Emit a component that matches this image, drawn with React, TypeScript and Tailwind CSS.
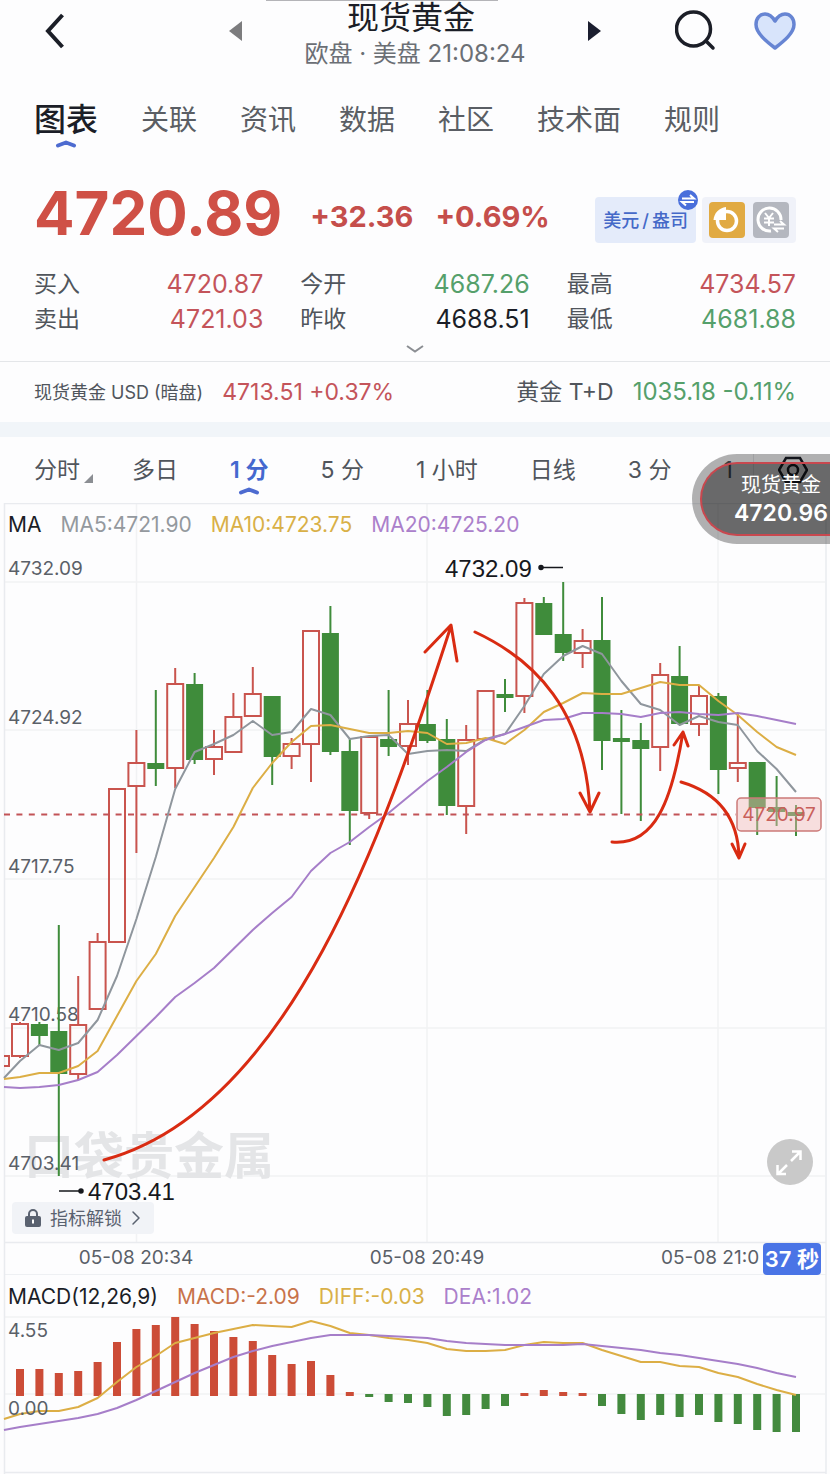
import { ChevronRight } from 'lucide-react';

type Candle = [up: boolean, high: number, top: number, bottom: number, low: number];

const STEP = 19.4;
const FIRST_X = 20;
const ZERO_Y = 1394;

const xAt = (i: number) => FIRST_X + i * STEP;

const U = true;
const D = false;

const candles: Candle[] = [
  [U, 1022, 1024, 1056, 1058], [D, 1022, 1024, 1036, 1046], [D, 925, 1031, 1074, 1176], [U, 976, 1025, 1074, 1080],
  [U, 933, 942, 1009, 1009], [U, 789, 789, 942, 942], [U, 730, 763, 786, 853], [D, 690, 763, 769, 786],
  [U, 668, 684, 768, 788], [D, 673, 684, 760, 764], [U, 730, 747, 759, 775], [U, 693, 717, 752, 752],
  [U, 667, 694, 716, 716], [D, 696, 696, 757, 785], [U, 738, 744, 756, 769], [U, 630, 631, 744, 782],
  [D, 606, 633, 752, 755], [D, 738, 751, 811, 845], [U, 737, 737, 813, 819], [D, 690, 739, 747, 756],
  [U, 700, 724, 746, 765], [D, 690, 724, 741, 743], [D, 719, 739, 806, 815], [U, 725, 740, 806, 834],
  [U, 691, 691, 739, 741], [D, 679, 694, 698, 712], [U, 598, 603, 696, 713], [D, 597, 603, 635, 635],
  [D, 582, 634, 653, 661], [U, 629, 641, 653, 668], [D, 597, 640, 741, 770], [D, 710, 738, 742, 814],
  [D, 723, 740, 749, 821], [U, 663, 675, 747, 771], [D, 646, 676, 724, 725], [U, 686, 696, 724, 736],
  [D, 693, 696, 770, 794], [U, 714, 763, 768, 782], [D, 762, 762, 808, 835], [D, 776, 807, 812, 826],
  [D, 805, 812, 816, 836],
];

// first value of every series is the point on the left edge of the plot
const ma5 = [1078, 1061, 1045, 1050, 1043, 1020, 976, 919, 857, 789, 752, 744, 735, 721, 735, 732, 709, 715, 739, 736, 735, 754, 751, 750, 751, 739, 734, 706, 674, 656, 646, 654, 681, 704, 710, 725, 716, 722, 725, 751, 769, 792];
const ma10 = [1079, 1077, 1073, 1073, 1066, 1051, 1016, 981, 954, 916, 887, 858, 827, 788, 763, 742, 726, 725, 729, 733, 733, 731, 733, 744, 743, 738, 744, 730, 712, 703, 693, 694, 694, 688, 682, 685, 685, 701, 715, 732, 747, 755];
const ma20 = [1087, 1088, 1087, 1085, 1080, 1072, 1055, 1036, 1017, 997, 983, 968, 949, 930, 913, 897, 871, 853, 842, 827, 813, 797, 781, 767, 752, 740, 734, 727, 720, 719, 713, 713, 714, 717, 713, 712, 714, 715, 713, 716, 720, 724];
const diff = [1419, 1414, 1411, 1411, 1407, 1398, 1382, 1367, 1356, 1343, 1338, 1333, 1329, 1325, 1326, 1327, 1321, 1326, 1333, 1335, 1338, 1340, 1343, 1349, 1351, 1351, 1350, 1345, 1342, 1343, 1343, 1350, 1356, 1362, 1362, 1366, 1367, 1373, 1377, 1384, 1390, 1395];
const dea = [1430, 1427, 1424, 1421, 1418, 1414, 1408, 1400, 1391, 1382, 1373, 1365, 1357, 1351, 1346, 1342, 1338, 1335, 1335, 1335, 1336, 1337, 1338, 1341, 1343, 1344, 1345, 1345, 1345, 1345, 1344, 1346, 1348, 1350, 1353, 1355, 1358, 1361, 1364, 1368, 1373, 1377];

// histogram height over (positive) or under (negative) the zero line
const histogram = [26, 26, 22, 24, 33, 53, 66, 70, 78, 71, 64, 58, 54, 40, 31, 34, 20, 3, -2, -7, -8, -12, -21, -20, -14, -11, 2, 5, 3, 2, -11, -19, -25, -20, -22, -20, -27, -29, -35, -37, -37];

const toPoints = (values: number[]) =>
  values.map((y, i) => `${i === 0 ? 4 : xAt(i - 1)},${y}`).join(' ');

const tabs = ['关联', '资讯', '数据', '社区', '技术面', '规则'];

const quotes = [
  { label: '买入', value: '4720.87', color: 'text-[#c4545a]' },
  { label: '今开', value: '4687.26', color: 'text-[#55a06b]' },
  { label: '最高', value: '4734.57', color: 'text-[#c4545a]' },
  { label: '卖出', value: '4721.03', color: 'text-[#c4545a]' },
  { label: '昨收', value: '4688.51', color: 'text-[#1b1e27]' },
  { label: '最低', value: '4681.88', color: 'text-[#55a06b]' },
];

const intervals = ['多日', '1 分', '5 分', '1 小时', '日线', '3 分', '1'];

const priceLabels = [
  { y: 575, text: '4732.09' },
  { y: 724, text: '4724.92' },
  { y: 873, text: '4717.75' },
  { y: 1021, text: '4710.58' },
  { y: 1170, text: '4703.41' },
];

function ActiveMark() {
  return (
    <svg viewBox="0 0 22 8" className="absolute top-full left-1/2 h-2 w-[22px] -translate-x-1/2" fill="none" stroke="#4d6bd0" strokeWidth="4" strokeLinecap="round" strokeLinejoin="round">
      <path d="M3 5.5 L11 2.5 L19 5.5" />
    </svg>
  );
}

function Header() {
  return (
    <header className="grid h-[72px] grid-cols-[121px_1fr_121px] px-[34px]">
      <button aria-label="返回" className="flex h-[62px] items-center pl-[11px]">
        <svg viewBox="0 0 20 36" className="h-9 w-5" fill="none" stroke="#1b1e27" strokeWidth="4">
          <path d="M17.5 2 L3 18 L17.5 34" />
        </svg>
      </button>
      <div className="flex justify-center">
        <button aria-label="上一个" className="flex h-[62px] items-center">
          <svg viewBox="0 0 14 20" className="h-5 w-3.5"><path d="M0 10 L13 0 V20 Z" fill="#7c7c7e" /></svg>
        </button>
        <div className="w-[344px] text-center">
          <h1 className="pr-2 text-[32px] leading-[36px] font-normal text-[#1b1e27]">现货黄金</h1>
          <p className="text-[24px] leading-[36px] text-[#6b6f75]">欧盘 · 美盘 21:08:24</p>
        </div>
        <button aria-label="下一个" className="flex h-[62px] items-center">
          <svg viewBox="0 0 14 20" className="h-5 w-3.5"><path d="M14 10 L1 0 V20 Z" fill="#1b1e2f" /></svg>
        </button>
      </div>
      <div className="flex h-[62px] items-center justify-between">
        <button aria-label="搜索">
          <svg viewBox="0 0 42 42" className="size-[42px]" fill="none" stroke="#1b1e27" strokeWidth="3.500" strokeLinecap="round">
            <circle cx="18.500" cy="19" r="17" />
            <path d="M31 31 L38 38" />
          </svg>
        </button>
        <button aria-label="收藏">
          <svg viewBox="0 0 42 38" className="h-[38px] w-[42px]" fill="#d8e4fb" stroke="#6785d3" strokeWidth="3.500" strokeLinejoin="round">
            <path d="M21 9 C18 4 15 2 11 2 C6 2 2 6 2 12.500 C2 21 12 29 21 36 C30 29 40 21 40 12.500 C40 6 36 2 31 2 C27 2 24 4 21 9 Z" />
          </svg>
        </button>
      </div>
    </header>
  );
}

function PriceRow() {
  return (
    <section className="mt-[41px] flex h-16 items-center justify-between px-[34px]">
      <div className="flex items-center">
        <strong className="text-[60px] leading-none font-bold text-[#cf5046]">4720.89</strong>
        <span className="ml-7 pt-2 text-[29px] font-bold text-[#c54e4b]">+32.36</span>
        <span className="ml-[22px] pt-2 text-[29px] font-bold text-[#c54e4b]">+0.69%</span>
      </div>
      <div className="flex gap-1.5 pt-3.5">
        <button className="relative h-[46px] rounded bg-[#e4ebfa] px-2 text-[18px] font-medium whitespace-nowrap text-[#4569c8]">
          美元<span className="mx-[3px]">/</span>盎司
          <svg viewBox="0 0 20 20" className="absolute -top-[7px] -right-0.5 size-5" fill="none" stroke="white" strokeWidth="2">
            <circle cx="10" cy="10" r="10" fill="#4a6fdb" stroke="none" />
            <path d="M4 8.500 H16 L12 5 M16 12 H4 L8 15.500" />
          </svg>
        </button>
        <div className="flex h-[46px] items-center gap-2 rounded bg-[#f0f2f9] px-[7px]">
          <button aria-label="持仓">
            <svg viewBox="0 0 36 36" className="size-9">
              <rect width="36" height="36" rx="4" fill="#e1aa42" />
              <circle cx="18" cy="19" r="9.500" fill="none" stroke="white" strokeWidth="3.500" />
              <path d="M4.500 18 C5 11 10 6 17 5 V18 Z" fill="white" />
            </svg>
          </button>
          <button aria-label="换算">
            <svg viewBox="0 0 36 36" className="size-9" fill="none" stroke="white" strokeWidth="2">
              <rect width="36" height="36" rx="4" fill="#b4b7bf" stroke="none" />
              <path d="M18 29 A11.500 11.500 0 1 1 28 18" strokeWidth="3" />
              <path d="M12 11 L16 16 L20 11 M16 16 V24 M11 16.500 H21 M11 20.500 H21" />
              <path d="M21 22.500 H31 L27 19 M31 26.500 H21 L25 30" />
            </svg>
          </button>
        </div>
      </div>
    </section>
  );
}

function PriceTag() {
  return (
    <aside className="absolute top-[454px] right-0 rounded-l-full bg-black/30 py-2 pl-2">
      <div className="flex h-[74px] flex-col items-center justify-center rounded-l-full border-2 border-r-0 border-[#c8484f] bg-black/40 pr-0.5 pl-8 text-white">
        <span className="text-[20px] leading-7">现货黄金</span>
        <strong className="text-[23px] leading-7 font-semibold">4720.96</strong>
      </div>
    </aside>
  );
}

function CandleChart() {
  return (
    <section className="relative">
      <svg viewBox="0 503 830 772" className="block h-auto w-full">
        <g stroke="#f1f2f4" strokeWidth="1.500">
          <path d="M4 582 H825 M4 730 H825 M4 879 H825 M4 1028 H825 M4 1176 H825" />
          <path d="M136.500 504 V1242 M427 504 V1242 M718 504 V1242" />
        </g>
        <path d="M4.500 1275 V503.500 H826 V1275 M4 1242.500 H826 M4 1275 H826" fill="none" stroke="#e9ebef" strokeWidth="1.500" />
        <text x="24" y="1174" fontSize="50" fontWeight="700" fill="#e4e5e7">口袋贵金属</text>

        <g fontSize="19" fill="#5a6068">
          {priceLabels.map((label) => (
            <text key={label.text} x="8" y={label.y}>{label.text}</text>
          ))}
          <text x="136" y="1264" textAnchor="middle">05-08 20:34</text>
          <text x="427" y="1264" textAnchor="middle">05-08 20:49</text>
          <text x="661" y="1264">05-08 21:0</text>
        </g>

        <path d="M4 1056 H9 V1066 H4" fill="none" stroke="#c9544e" strokeWidth="2" />
        {candles.map(([up, high, top, bottom, low], i) => {
          const x = xAt(i);
          return up ? (
            <g key={i} fill="none" stroke="#c9544e" strokeWidth="2">
              <path d={`M${x} ${high} V${top} M${x} ${bottom} V${low}`} />
              <rect x={x - 8} y={top} width="16" height={bottom - top} />
            </g>
          ) : (
            <g key={i} fill="#3f8c3b">
              <rect x={x - 1} y={high} width="2" height={low - high} />
              <rect x={x - 8.5} y={top} width="17" height={bottom - top} />
            </g>
          );
        })}

        <path d="M4 814.500 H736" stroke="#c25356" strokeWidth="2" strokeDasharray="6 6.400" />
        <g fill="none" strokeWidth="2" strokeLinejoin="round">
          <polyline points={toPoints(ma5)} stroke="#8f969d" />
          <polyline points={toPoints(ma10)} stroke="#dcae45" />
          <polyline points={toPoints(ma20)} stroke="#a67ec9" />
        </g>

        <rect x="737" y="798" width="84" height="33" rx="4" fill="#efb9b7" fillOpacity="0.45" stroke="#cc7a78" strokeWidth="1.500" />
        <text x="779" y="821" textAnchor="middle" fontSize="19" fill="#c9605b">4720.97</text>

        <g className="font-['Liberation_Sans',sans-serif]" fontSize="24" fill="#16181d">
          <text x="445" y="577">4732.09</text>
          <text x="88" y="1200">4703.41</text>
        </g>
        <g stroke="#16181d" strokeWidth="1.500" fill="#16181d">
          <path d="M541 567.500 H563 M59 1191 H81" />
          <circle cx="541" cy="567.500" r="2" />
          <circle cx="81" cy="1191" r="2" />
        </g>

        <g fill="none" stroke="#d92b12" strokeWidth="3" strokeLinecap="round" strokeLinejoin="round">
          <path d="M104 1160 C290 1110 385 830 451 626 M425 652 L451 625 L457 661" />
          <path d="M475 632 C535 660 585 710 590 811 M580 793 L590 812 L599 793" />
          <path d="M612 842 C655 846 672 800 683 732 M674 745 L683 732 L688 746" />
          <path d="M681 782 C715 792 738 815 739 857 M732 844 L739 858 L745 844" />
        </g>
      </svg>

      <div className="absolute top-2 left-2 flex gap-[19px] text-[21px] leading-7">
        <span className="text-[#1b1e27]">MA</span>
        <span className="text-[#94999e]">MA5:4721.90</span>
        <span className="text-[#d9b047]">MA10:4723.75</span>
        <span className="text-[#ab80cb]">MA20:4725.20</span>
      </div>
      <button className="absolute bottom-[41px] left-3 flex h-8 items-center rounded bg-[#f1f3f7] px-3 text-[18px] text-[#5a6270]">
        <svg viewBox="0 0 18 20" className="mr-2 h-5 w-[18px]">
          <path d="M5 9 V6 A4 4 0 0 1 13 6 V9" fill="none" stroke="#5a6270" strokeWidth="2" />
          <rect x="1" y="8" width="16" height="11" rx="2" fill="#5a6270" />
          <path d="M9 11.500 V15.500" stroke="white" strokeWidth="2" />
        </svg>
        指标解锁
        <ChevronRight className="-mr-1.5 ml-0.5 size-6" strokeWidth={1.5} />
      </button>
      <button aria-label="全屏" className="absolute right-[17px] bottom-[90px] size-[46px] rounded-full bg-[#c9c9c9]">
        <svg viewBox="0 0 46 46" className="size-full" fill="none" stroke="white" strokeWidth="2.500">
          <path d="M24 22 L33 13 M25 12.500 H33.500 V21 M20 26 L11 35 M10.500 26 V35 H19" />
        </svg>
      </button>
      <span className="absolute right-[9px] bottom-0 flex h-8 items-center rounded bg-[#4a74e6] px-0.5 text-[22px] font-semibold whitespace-nowrap text-white">37 秒</span>
    </section>
  );
}

function MacdChart() {
  return (
    <section className="relative">
      <svg viewBox="0 1275 830 199" className="block h-auto w-full">
        <path d="M4 1317 H825 M4 1394 H825" stroke="#f1f2f4" strokeWidth="1.500" />
        <path d="M4.500 1275 V1474 M826 1275 V1474 M4 1472.500 H826" stroke="#e9ebef" strokeWidth="1.500" />
        {histogram.map((h, i) => (
          <rect
            key={i}
            x={xAt(i) - 4}
            y={h > 0 ? ZERO_Y + 1 - h : ZERO_Y}
            width="8"
            height={Math.abs(h) + 1}
            fill={h > 0 ? '#cc4c37' : '#438a3e'}
          />
        ))}
        <g fill="none" strokeWidth="2" strokeLinejoin="round">
          <polyline points={toPoints(diff)} stroke="#dcae45" />
          <polyline points={toPoints(dea)} stroke="#a67ec9" />
        </g>
        <g fontSize="19" fill="#5a6068">
          <text x="8" y="1337">4.55</text>
          <text x="8" y="1415">0.00</text>
        </g>
      </svg>
      <div className="absolute top-2 left-2 flex gap-[19px] text-[21px] leading-7">
        <span className="text-[#1b1e27]">MACD(12,26,9)</span>
        <span className="text-[#c8734a]">MACD:-2.09</span>
        <span className="text-[#d9b047]">DIFF:-0.03</span>
        <span className="text-[#ab80cb]">DEA:1.02</span>
      </div>
    </section>
  );
}

export default function App() {
  return (
    <main className="relative min-h-screen overflow-hidden bg-[#fdfdfe] font-['Inter','Noto_Sans_CJK_SC',sans-serif]">
      <div className="absolute top-0 left-[32%] h-px w-[28%] bg-[#b4b4b8]" />
      <Header />

      <nav className="mt-7 flex gap-[43px] px-[34px] text-[28px] leading-10 whitespace-nowrap text-[#5a5e64]">
        <a href="#chart" className="relative text-[32px] font-medium text-[#1b1e27]">
          图表
          <ActiveMark />
        </a>
        {tabs.map((tab) => (
          <a key={tab} href="#tab">{tab}</a>
        ))}
      </nav>

      <PriceRow />

      <dl className="mt-[22px] grid grid-cols-3 gap-x-[37px] px-[34px] leading-[35px]">
        {quotes.map((quote) => (
          <div key={quote.label} className="flex items-center justify-between">
            <dt className="text-[23px] text-[#50555c]">{quote.label}</dt>
            <dd className={`text-[25px] ${quote.color}`}>{quote.value}</dd>
          </div>
        ))}
      </dl>
      <button aria-label="展开" className="flex h-6 w-full items-center justify-center">
        <svg viewBox="0 0 18 8" className="h-2 w-[18px]" fill="none" stroke="#8b8e93" strokeWidth="2">
          <path d="M1 1 L9 6.500 L17 1" />
        </svg>
      </button>

      <section className="flex h-[61px] items-center justify-between border-t border-[#e4e6e9] px-[34px] whitespace-nowrap">
        <div className="flex items-center">
          <span className="text-[18px] text-[#50555c]">现货黄金 USD (暗盘)</span>
          <span className="ml-[19px] text-[23px] text-[#c4545a]">4713.51 +0.37%</span>
        </div>
        <div className="flex items-center">
          <span className="text-[23px] text-[#50555c]">黄金 T+D</span>
          <span className="ml-[19px] text-[24px] text-[#55a06b]">1035.18 -0.11%</span>
        </div>
      </section>
      <div className="h-[15px] bg-[#f1f5f9]" />

      <div className="flex h-[66px] items-center gap-[52px] pr-[22px] pl-[34px] text-[23px] whitespace-nowrap text-[#50555c]">
        <button className="relative">
          分时
          <svg viewBox="0 0 9 9" className="absolute bottom-1 left-full ml-1 size-[9px]"><path d="M9 0 V9 H0 Z" fill="#8b8e93" /></svg>
        </button>
        {intervals.map((item) =>
          item === '1 分' ? (
            <button key={item} className="relative font-semibold text-[#4468cf]">
              {item}
              <ActiveMark />
            </button>
          ) : (
            <button key={item}>{item}</button>
          )
        )}
        <button aria-label="设置" className="-ml-8 flex h-8 grow justify-end border-l border-[#e4e6e9] pt-0.5">
          <svg viewBox="0 0 30 28" className="h-7 w-[30px]" fill="none" stroke="#1b1e27" strokeWidth="2.500">
            <path d="M8 2 H22 L29 14 L22 26 H8 L1 14 Z" />
            <circle cx="15" cy="14" r="5" />
          </svg>
        </button>
      </div>

      <CandleChart />
      <MacdChart />
      <PriceTag />
    </main>
  );
}
